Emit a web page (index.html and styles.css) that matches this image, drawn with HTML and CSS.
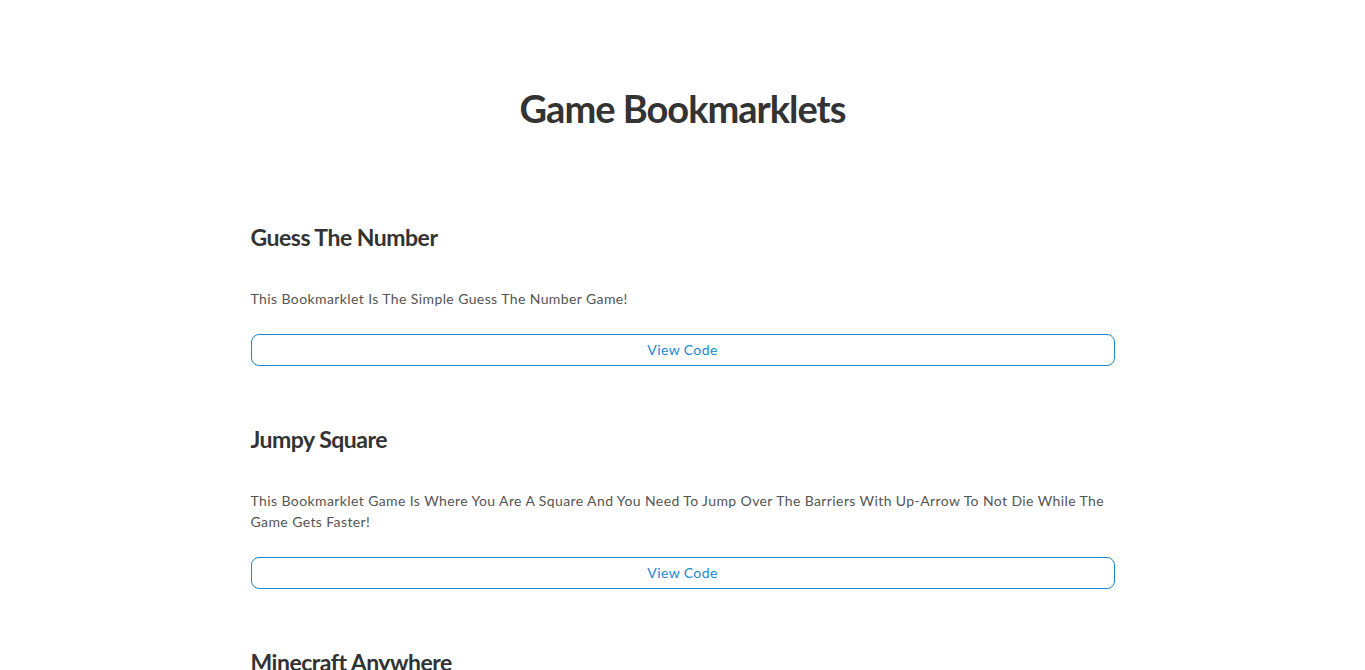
FILE: index.html
```html
<!DOCTYPE html>
<html lang="en">
<head>
<meta charset="utf-8">
<title>Game Bookmarklets</title>
<link rel="stylesheet" href="styles.css">
</head>
<body>
<main class="page">
  <h1 class="title">Game Bookmarklets</h1>
  <section class="game">
    <h2 class="game-name">Guess The Number</h2>
    <p class="game-desc">This Bookmarklet Is The Simple Guess The Number Game!</p>
    <button class="view-btn">View Code</button>
  </section>
  <section class="game">
    <h2 class="game-name">Jumpy Square</h2>
    <p class="game-desc">This Bookmarklet Game Is Where You Are A Square And You Need To Jump Over The Barriers With Up-Arrow To Not Die While The Game Gets Faster!</p>
    <button class="view-btn">View Code</button>
  </section>
  <section class="game">
    <h2 class="game-name">Minecraft Anywhere</h2>
    <p class="game-desc">This Bookmarklet Lets You Play Minecraft Anywhere!</p>
    <button class="view-btn">View Code</button>
  </section>
</main>
</body>
</html>
```

FILE: styles.css
```css
html, body {
  margin: 0;
  padding: 0;
  background: #fff;
}
body {
  font-family: "Lato", "Open Sans", sans-serif;
  color: #555;
}
.page {
  width: 864px;
  margin: 0 auto;
  padding-top: 84px;
}
.title {
  margin: 0 0 91px;
  text-align: center;
  font-size: 38px;
  line-height: 48px;
  letter-spacing: -1px;
  font-weight: 700;
  color: #333;
}
.game {
  display: flex;
  flex-direction: column;
  margin-bottom: 59px;
}
.game-name {
  margin: 0 0 37px;
  font-size: 23px;
  line-height: 28px;
  letter-spacing: -0.5px;
  font-weight: 700;
  color: #333;
}
.game-desc {
  margin: 0 0 25px;
  font-size: 14px;
  line-height: 21px;
  letter-spacing: 0.4px;
  color: #555;
}
.view-btn {
  height: 32px;
  width: 100%;
  padding: 0 0 2px;
  border: 1px solid #1a88d4;
  border-radius: 8px;
  background: #fff;
  color: #1a88d4;
  font-family: inherit;
  font-size: 14px;
  letter-spacing: 0.4px;
  cursor: pointer;
}
```
